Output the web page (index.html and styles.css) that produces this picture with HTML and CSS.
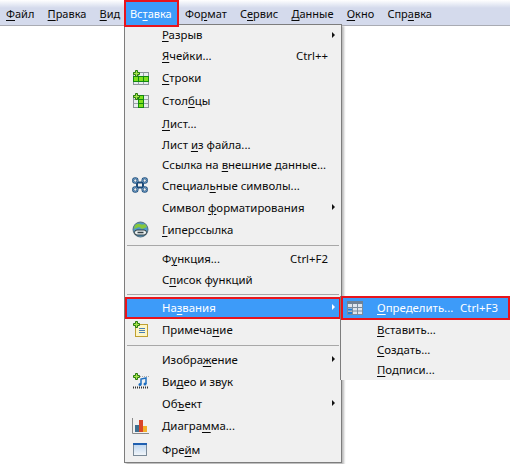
FILE: index.html
```html
<!DOCTYPE html>
<html lang="ru">
  <head>
    <meta charset="UTF-8" />
    <title>Вставка</title>
    <link rel="stylesheet" href="styles.css">
  </head>
  <body>
    <nav class="menubar">
      <a class="top-item"><u>Ф</u>айл</a>
      <a class="top-item"><u>П</u>равка</a>
      <a class="top-item"><u>В</u>ид</a>
      <a class="top-item active">Вс<u>т</u>авка</a>
      <a class="top-item">Фо<u>р</u>мат</a>
      <a class="top-item">С<u>е</u>рвис</a>
      <a class="top-item"><u>Д</u>анные</a>
      <a class="top-item"><u>О</u>кно</a>
      <a class="top-item">Спр<u>а</u>вка</a>
    </nav>

    <!-- Insert menu -->
    <div class="menu">
      <div class="row h21"><span class="icon"></span><span><u>Р</u>азрыв</span><i class="arrow"></i></div>
      <div class="row h21"><span class="icon"></span><span><u>Я</u>чейки...</span><span class="keys">Ctrl++</span></div>
      <div class="row h23">
        <span class="icon">
          <svg width="17" height="17" viewBox="0 0 17 17">
            <rect x="1.500" y="3.500" width="15" height="12" fill="#e8edf0" stroke="#8a9298"/>
            <path d="M6.500 3.500v12M11.500 3.500v12" stroke="#9aa2a8"/>
            <rect x="1.500" y="7.500" width="15" height="5" fill="#7fe01e" stroke="#128a10"/>
            <path d="M6.500 8v4M11.500 8v4" stroke="#128a10"/>
            <path d="M3.500 1.500h2v2h2v2h-2v2h-2v-2h-2v-2h2z" fill="#a6e64a" stroke="#2a7a10"/>
          </svg>
        </span>
        <span><u>С</u>троки</span>
      </div>
      <div class="row h23">
        <span class="icon">
          <svg width="17" height="17" viewBox="0 0 17 17">
            <rect x="1.500" y="3.500" width="15" height="12" fill="#e8edf0" stroke="#8a9298"/>
            <path d="M1.500 7.500h15M1.500 11.500h15" stroke="#9aa2a8"/>
            <rect x="6.500" y="3.500" width="5" height="12" fill="#7fe01e" stroke="#128a10"/>
            <path d="M7 7.500h4M7 11.500h4" stroke="#128a10"/>
            <path d="M3.500 1.500h2v2h2v2h-2v2h-2v-2h-2v-2h2z" fill="#a6e64a" stroke="#2a7a10"/>
          </svg>
        </span>
        <span>Стол<u>б</u>цы</span>
      </div>
      <div class="row h22"><span class="icon"></span><span><u>Л</u>ист...</span></div>
      <div class="row h20"><span class="icon"></span><span>Лист <u>и</u>з файла...</span></div>
      <div class="row h20"><span class="icon"></span><span>Ссылка на <u>в</u>нешние данные...</span></div>
      <div class="row h22">
        <span class="icon">
          <svg width="16" height="16" viewBox="0 0 16 16" fill="none">
            <path d="M5 5.500h6v5H5zM5.500 5V3.500a2.200 2.200 0 1 0-2.200 2.200H5M10.500 5V3.500a2.200 2.200 0 1 1 2.200 2.200H11M5.500 11v1.500a2.200 2.200 0 1 1-2.200-2.200H5M10.500 11v1.500a2.200 2.200 0 1 0 2.200-2.200H11" stroke="#1c4a78" stroke-width="2"/>
            <path d="M5.500 5V3.500a2.200 2.200 0 1 0-2.200 2.200H5M10.500 5V3.500a2.200 2.200 0 1 1 2.200 2.200H11M5.500 11v1.500a2.200 2.200 0 1 1-2.200-2.200H5M10.500 11v1.500a2.200 2.200 0 1 0 2.200-2.200H11" stroke="#7fb0d8" stroke-width="0.700"/>
          </svg>
        </span>
        <span>Специал<u>ь</u>ные символы...</span>
      </div>
      <div class="row h22"><span class="icon"></span><span>Символ <u>ф</u>орматирования</span><i class="arrow"></i></div>
      <div class="row h22">
        <span class="icon">
          <svg width="17" height="17" viewBox="0 0 17 17">
            <circle cx="8.500" cy="8.500" r="7.500" fill="#4f9ac8" stroke="#55707f"/>
            <path d="M3 4q3-2 5-1t5 0l2 3-5 2-3-2-5 2z" fill="#86c83c"/>
            <rect x="2.500" y="9" width="12" height="5" rx="2.500" fill="#e8eeee" stroke="#333f44"/>
            <path d="M5.500 11.500h6" stroke="#333f44" stroke-width="1.500"/>
          </svg>
        </span>
        <span><u>Г</u>иперссылка</span>
      </div>
      <div class="sep h8"></div>
      <div class="row h21"><span class="icon"></span><span>Ф<u>у</u>нкция...</span><span class="keys">Ctrl+F2</span></div>
      <div class="row h21"><span class="icon"></span><span>С<u>п</u>исок функций</span></div>
      <div class="sep h6"></div>
      <div class="row h22 selected"><span class="icon"></span><span>На<u>з</u>вания</span><i class="arrow"></i></div>
      <div class="row h22">
        <span class="icon">
          <svg width="17" height="17" viewBox="0 0 17 17">
            <rect x="3.500" y="3.500" width="12" height="12" fill="#fdf6c8" stroke="#c0a030"/>
            <path d="M7 7.500h6M7 9.500h6M7 11.500h6" stroke="#4a7fb5"/>
            <path d="M3.500 0.500h2v2h2v2h-2v2h-2v-2h-2v-2h2z" fill="#a6e64a" stroke="#2a7a10"/>
          </svg>
        </span>
        <span>Примеча<u>н</u>ие</span>
      </div>
      <div class="sep h8"></div>
      <div class="row h22"><span class="icon"></span><span>Изобра<u>ж</u>ение</span><i class="arrow"></i></div>
      <div class="row h22">
        <span class="icon">
          <svg width="17" height="17" viewBox="0 0 17 17">
            <path d="M1 14.500h16" stroke="#333" stroke-dasharray="1 1" stroke-width="2"/>
            <path d="M8 3.500h9" stroke="#aaa" stroke-dasharray="1 1"/>
            <path d="M9 11.500V6l5-1v6" fill="none" stroke="#1f6fc0" stroke-width="1.500"/>
            <circle cx="8" cy="11.500" r="1.500" fill="#1f6fc0"/>
            <circle cx="13" cy="11" r="1.500" fill="#1f6fc0"/>
            <path d="M3.500 0.500h2v2h2v2h-2v2h-2v-2h-2v-2h2z" fill="#a6e64a" stroke="#2a7a10"/>
          </svg>
        </span>
        <span>Ви<u>д</u>ео и звук</span>
      </div>
      <div class="row h22"><span class="icon"></span><span>Об<u>ъ</u>ект</span><i class="arrow"></i></div>
      <div class="row h23">
        <span class="icon">
          <svg width="17" height="17" viewBox="0 0 17 17">
            <path d="M0.500 1v15.500H17" fill="none" stroke="#8a8a8a"/>
            <rect x="3" y="8" width="4" height="7" fill="#3f6f8f"/>
            <rect x="7" y="3" width="4" height="12" fill="#d8452a"/>
            <rect x="11" y="9" width="4" height="6" fill="#f2b02a"/>
          </svg>
        </span>
        <span>Диагра<u>м</u>ма...</span>
      </div>
      <div class="row h24">
        <span class="icon">
          <svg width="17" height="17" viewBox="0 0 17 17">
            <defs>
              <linearGradient id="frame-fill" x1="0" y1="0" x2="0" y2="1">
                <stop offset="0" stop-color="#b9d3ee"/>
                <stop offset="1" stop-color="#f4f7fa"/>
              </linearGradient>
            </defs>
            <rect x="1.500" y="2.500" width="13" height="12" fill="url(#frame-fill)" stroke="#7a8a98"/>
            <path d="M1 3h14" stroke="#1f5fb0" stroke-width="2"/>
          </svg>
        </span>
        <span>Фре<u>й</u>м</span>
      </div>
    </div>

    <!-- Names submenu -->
    <div class="submenu">
      <div class="sub-row selected">
        <span class="sub-icon">
          <svg width="16" height="14" viewBox="0 0 16 14">
            <rect x="0.500" y="0.500" width="15" height="13" fill="#dfe6ee" stroke="#7a8c9e"/>
            <rect x="0" y="0" width="16" height="3" fill="#6f8296"/>
            <path d="M0 6.500h16M0 10h16M5.500 3v11M10.500 3v11" stroke="#7a8c9e"/>
            <rect x="1" y="11" width="4" height="2" fill="#1f7fd8"/>
            <rect x="1" y="7.500" width="4" height="2" fill="#1f7fd8"/>
          </svg>
        </span>
        <span><u>О</u>пределить...</span>
        <span class="sub-keys">Ctrl+F3</span>
      </div>
      <div class="sub-row"><span class="sub-icon"></span><span><u>В</u>ставить...</span></div>
      <div class="sub-row"><span class="sub-icon"></span><span><u>С</u>оздать...</span></div>
      <div class="sub-row"><span class="sub-icon"></span><span><u>П</u>одписи...</span></div>
    </div>
  </body>
</html>
```

FILE: styles.css
```css
body {
  margin: 0;
  height: 464px;
  overflow: hidden;
  background: #fff;
  font-family: "Noto Sans", sans-serif;
  font-size: 11.4px;
  color: #0a0a0a;
}

u {
  text-underline-offset: 2px;
}

.menubar {
  display: flex;
  height: 25px;
  padding-left: 6px;
  font-size: 11px;
  background: linear-gradient(#fff, #d4daec 8px);
  border-bottom: 1px solid #a9abb3;
}

.top-item {
  position: relative;
  display: flex;
  align-items: center;
  margin-right: 13.2px;
  padding-top: 1px;
  white-space: nowrap;
}

.top-item.active {
  z-index: 2;
  box-sizing: border-box;
  width: 55px;
  height: 27px;
  margin: 0 6px 0 -9.5px;
  padding: 0 0 0 4px;
  color: #fff;
  background: #3d9bf9;
  border: 2px solid #e8141c;
}

.menu {
  position: absolute;
  left: 124px;
  top: 24px;
  width: 216px;
  background: #f0f0f0;
  border: 1px solid #7d7d7d;
  box-shadow: 2px 2px 2px #bbb;
}

.row {
  display: flex;
  align-items: center;
  box-sizing: border-box;
  padding: 0 6px 2px 0;
}

.icon {
  display: flex;
  align-items: center;
  justify-content: center;
  width: 30px;
  margin-right: 7px;
}

.keys {
  margin-left: auto;
  padding-right: 7px;
}

.arrow {
  margin-left: auto;
  border-left: 3px solid #111;
  border-top: 3px solid transparent;
  border-bottom: 3px solid transparent;
}

.h20 { height: 20px; }
.h21 { height: 21px; }
.h22 { height: 22px; }
.h23 { height: 23px; }
.h24 { height: 24px; }

.sep {
  display: flex;
  align-items: center;
  margin: 0 2px;
}

.sep::after {
  content: "";
  flex: 1;
  height: 1px;
  background: #a8a8a8;
}

.h6 { height: 6px; }
.h8 { height: 8px; }

.selected {
  color: #fff;
  background: #3d9bf9;
  outline: 2px solid #e8141c;
  outline-offset: -2px;
}

.selected .arrow {
  border-left-color: #fff;
}

.submenu {
  position: absolute;
  left: 340px;
  top: 296px;
  width: 170px;
  height: 84px;
  background: #f0f0f0;
  border-left: 1px solid #7d7d7d;
  box-sizing: border-box;
}

.sub-row {
  display: flex;
  align-items: center;
  box-sizing: border-box;
  height: 20px;
  padding-bottom: 2px;
}

.sub-row.selected {
  height: 24px;
  padding-bottom: 1px;
}

.sub-icon {
  flex: none;
  display: flex;
  width: 30px;
  padding-left: 6px;
}

.sub-keys {
  margin-left: auto;
  padding-right: 12px;
}
```
